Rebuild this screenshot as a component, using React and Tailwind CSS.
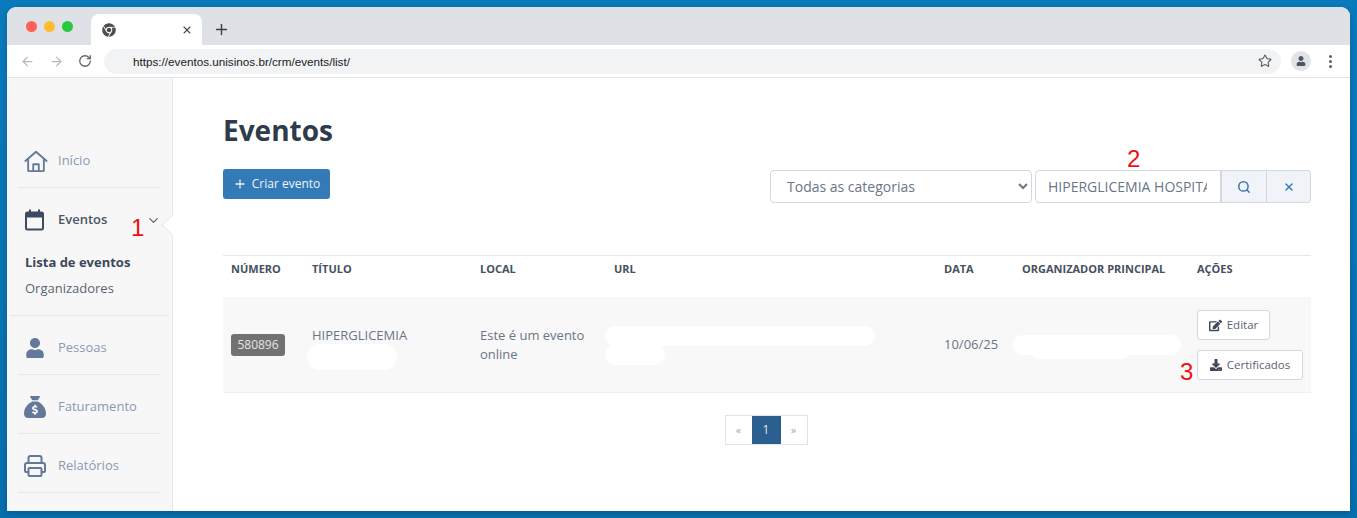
import React from 'react'
import { ArrowLeft, ArrowRight, RotateCw, Star, X, Plus, ChevronDown, Search } from 'lucide-react'
import { FaChrome, FaUser, FaEdit, FaDownload } from 'react-icons/fa'
import { FaSackDollar } from 'react-icons/fa6'

const HomeIcon = () => (
  <svg width="24" height="23" viewBox="0 0 26 24" fill="none" stroke="#64789a" strokeWidth="2" strokeLinejoin="round" strokeLinecap="round" className="ml-[3px]">
    <path d="M1.5 11.5 13 1.5l11.500 10" />
    <path d="M4.500 9.500V21.500a1 1 0 0 0 1 1h15a1 1 0 0 0 1-1V9.500" />
    <path d="M10 22.500V15h6v7.500" />
  </svg>
)

const CalendarIcon = () => (
  <svg width="19" height="22" viewBox="0 0 19 22" fill="none">
    <rect x="1" y="3.500" width="17" height="17" rx="1.500" stroke="#3c4a62" strokeWidth="2" />
    <rect x="1" y="3.500" width="17" height="5" fill="#3c4a62" />
    <rect x="4" y="0.500" width="2" height="4" fill="#3c4a62" />
    <rect x="13" y="0.500" width="2" height="4" fill="#3c4a62" />
  </svg>
)

const PrinterIcon = () => (
  <svg width="22" height="22" viewBox="0 0 22 22" fill="none" stroke="#64789a" strokeWidth="2" strokeLinejoin="round">
    <path d="M4.500 8V3a2 2 0 0 1 2-2h9a2 2 0 0 1 2 2v5" />
    <path d="M4.500 17H2a1 1 0 0 1-1-1v-6a2 2 0 0 1 2-2h16a2 2 0 0 1 2 2v6a1 1 0 0 1-1 1h-2.500" />
    <rect x="4.500" y="13" width="13" height="8" rx="1" />
  </svg>
)

const PersonIcon = () => <FaUser size={20} color="#64789a" />

function NavItem({ icon, label }) {
  return (
    <div className="h-[59px] pt-[6px] mx-[11px] flex items-center border-b border-[#e2e8f0] text-[13px] text-[#8a9ab4]">
      <div className="w-[40px] flex justify-center pr-[7px] shrink-0">{icon}</div>
      <span>{label}</span>
    </div>
  )
}

function Sidebar() {
  return (
    <aside className="relative w-[166px] shrink-0 bg-[#f7f7f7] border-r border-[#e2e8f0] pt-[51px]">
      <NavItem icon={<HomeIcon />} label="Início" />
      <div className="mx-[3px] border-b border-[#e2e8f0] h-[128px]">
        <div className="h-[64px] pl-[8px] flex items-center text-[13px] font-semibold text-[#4a5566]">
          <div className="w-[40px] flex justify-center pr-[7px] shrink-0"><CalendarIcon /></div>
          <span>Eventos</span>
          <ChevronDown size={15} strokeWidth={2} className="ml-[39px] text-[#5a6678]" />
        </div>
        <div className="-mt-[3px] pl-[15px] text-[13px] leading-[26px] text-[#5a6472]">
          <div className="font-bold text-[#3e4858]">Lista de eventos</div>
          <div>Organizadores</div>
        </div>
      </div>
      <NavItem icon={<PersonIcon />} label="Pessoas" />
      <NavItem icon={<FaSackDollar size={22} color="#64789a" />} label="Faturamento" />
      <NavItem icon={<PrinterIcon />} label="Relatórios" />
      {/* notch pointing at the active item */}
      <div className="absolute right-[-1px] top-[136px] w-[11px] h-[22px] overflow-hidden">
        <div className="absolute left-[3px] top-[3px] w-[16px] h-[16px] rotate-45 bg-white border-l border-b border-[#e2e8f0]" />
      </div>
    </aside>
  )
}

function Blob({ className }) {
  return <div className={'absolute bg-white rounded-full ' + className} />
}

function EventsTable() {
  const grid = 'grid grid-cols-[81px_168px_134px_330px_78px_174px_1fr]'
  return (
    <div className="mt-[52px]">
      <div className={grid + ' h-[42px] pt-[5px] items-start border-t border-[#e5e7eb] pl-[8px] text-[11px] leading-[15px] font-bold text-[#465060]'}>
        <div>NÚMERO</div>
        <div>TÍTULO</div>
        <div>LOCAL</div>
        <div>URL</div>
        <div>DATA</div>
        <div>ORGANIZADOR PRINCIPAL</div>
        <div className="pl-[1px]">AÇÕES</div>
      </div>
      <div className={grid + ' relative h-[96px] bg-[#f8f8f8] border-b border-[#ecf0f6] pl-[8px] text-[13px] text-[#6a7686]'}>
        <div className="pt-[37px]">
          <span className="inline-block w-[54px] h-[22px] leading-[21px] text-center rounded-[3px] bg-[#727272] text-[12px] text-[#e4e4e4]">580896</span>
        </div>
        <div className="pt-[29px] leading-[19px]">HIPERGLICEMIA</div>
        <div className="pt-[29px] leading-[19px] pr-[20px]">Este é um evento online</div>
        <div />
        <div className="pt-[38px] leading-[19px]">10/06/25</div>
        <div />
        <div className="pt-[13px] pl-[1px] flex flex-col items-start gap-[10px]">
          <button className="h-[30px] w-[73px] flex items-center justify-center gap-[5px] bg-white border border-[#d4d7dc] rounded-[3px] text-[11.500px] text-[#5a6472]">
            <FaEdit size={13} color="#3e4858" />Editar
          </button>
          <button className="h-[30px] w-[106px] flex items-center justify-center gap-[5px] bg-white border border-[#d4d7dc] rounded-[3px] text-[11.500px] text-[#5a6472]">
            <FaDownload size={12} color="#3e4858" />Certificados
          </button>
        </div>
        {/* blurred-out values */}
        <Blob className="left-[84px] top-[47px] w-[90px] h-[26px]" />
        <Blob className="left-[382px] top-[29px] w-[270px] h-[20px]" />
        <Blob className="left-[382px] top-[47px] w-[60px] h-[21px]" />
        <Blob className="left-[790px] top-[38px] w-[168px] h-[20px]" />
        <Blob className="left-[808px] top-[44px] w-[100px] h-[18px]" />
      </div>
    </div>
  )
}

function Pagination() {
  return (
    <div className="mt-[22px] mr-[2px] flex justify-center">
      <div className="flex h-[30px] border border-[#e2e2e2] text-[11px] text-[#a9a9a9]">
        <div className="w-[26px] flex items-center justify-center bg-white">«</div>
        <div className="w-[29px] flex items-center justify-center bg-[#2a5f90] text-[12px] text-[#d8e6f2]">1</div>
        <div className="w-[26px] flex items-center justify-center bg-white">»</div>
      </div>
    </div>
  )
}

function Browser() {
  return (
    <>
      <div className="h-[38px] bg-[#dee1e6] flex items-end rounded-t-[9px] shrink-0 pl-[84px]">
        <div className="absolute left-[26px] top-[21px] flex gap-[7px]">
          <span className="w-[11px] h-[11px] rounded-full bg-[#ff5f57]" />
          <span className="w-[11px] h-[11px] rounded-full bg-[#ffbd2e]" />
          <span className="w-[11px] h-[11px] rounded-full bg-[#28c940]" />
        </div>
        <div className="w-[111px] h-[31px] bg-white rounded-t-[8px] flex items-center justify-between pl-[11px] pr-[9px]">
          <FaChrome size={14} color="#4a4d52" />
          <X size={12} strokeWidth={2.2} className="text-[#45484d]" />
        </div>
        <Plus size={17} strokeWidth={2} className="ml-[11px] mb-[7px] text-[#3c4043]" />
      </div>
      <div className="h-[33px] bg-white border-b border-[#e4e4e4] flex items-center shrink-0 pl-[13px] pr-[14px]">
        <ArrowLeft size={15} className="text-[#b8babd]" />
        <ArrowRight size={15} className="ml-[14px] text-[#b8babd]" />
        <RotateCw size={14} strokeWidth={2.2} className="ml-[14px] text-[#5f6368]" />
        <div className="ml-[12px] w-[1177px] h-[25px] bg-[#f1f3f4] rounded-full flex items-center justify-between pl-[29px] pr-[9px]">
          <span className="pt-[2px] font-['Liberation_Sans',sans-serif] text-[11.700px] text-[#202124]">https://eventos.unisinos.br/crm/events/list/</span>
          <Star size={14} strokeWidth={2} className="text-[#5f6368]" />
        </div>
        <div className="ml-[10px] w-[20px] h-[20px] rounded-full bg-[#e1e3e6] flex items-center justify-center">
          <FaUser size={10} color="#4c5666" />
        </div>
        <div className="ml-[18px] flex flex-col gap-[2px]">
          <span className="w-[3px] h-[3px] rounded-full bg-[#5f6368]" />
          <span className="w-[3px] h-[3px] rounded-full bg-[#5f6368]" />
          <span className="w-[3px] h-[3px] rounded-full bg-[#5f6368]" />
        </div>
      </div>
    </>
  )
}

function Annotation({ className, children }) {
  return <span className={"absolute font-['Liberation_Sans',sans-serif] text-[24px] leading-none text-[#ee1111] " + className}>{children}</span>
}

export default function App() {
  return (
    <div className="w-[1357px] h-[518px] bg-gradient-to-b from-[#0a7abc] to-[#086fad] p-[7px] overflow-hidden font-['Open_Sans',sans-serif]">
      <div className="w-[1343px] h-[504px] flex flex-col bg-white rounded-t-[9px] overflow-hidden shadow-[0_2px_6px_rgba(0,0,0,0.2)]">
        <Browser />
        <div className="flex flex-1 min-h-0">
          <Sidebar />
          <main className="flex-1 pl-[50px] pr-[39px]">
            <h1 className="mt-[34px] text-[28px] leading-[36px] font-bold text-[#2f3b4b]">Eventos</h1>
            <div className="mt-[21px] flex items-start justify-between">
              <button className="h-[30px] w-[107px] flex items-center justify-center gap-[5px] rounded-[3px] bg-[#337ab7] text-[12px] text-[#eef4fa]">
                <Plus size={14} strokeWidth={2.2} />Criar evento
              </button>
              <div className="mt-[1px] flex h-[33px] text-[14px] text-[#6a7686]">
                <select className="w-[262px] h-full pl-[12px] bg-white border border-[#d4d7dc] rounded-[4px] text-[#6a7686] outline-none">
                  <option>Todas as categorias</option>
                </select>
                <input readOnly value="HIPERGLICEMIA HOSPITALAR" className="ml-[3px] w-[186px] h-full pl-[12px] pr-[13px] bg-white border border-[#d4d7dc] rounded-l-[4px] outline-none" />
                <div className="w-[46px] flex items-center justify-center bg-[#f0f4f9] border-y border-x border-[#d4d7dc]">
                  <Search size={14} strokeWidth={2.7} color="#3a7ab5" />
                </div>
                <div className="w-[44px] flex items-center justify-center bg-[#f0f4f9] border-y border-r border-[#d4d7dc] rounded-r-[4px]">
                  <X size={12} strokeWidth={3} color="#3a7ab5" />
                </div>
              </div>
            </div>
            <EventsTable />
            <Pagination />
          </main>
        </div>
        {/* red step markers painted over the screenshot */}
        <Annotation className="left-[131px] top-[216px]">1</Annotation>
        <Annotation className="left-[1127px] top-[147px]">2</Annotation>
        <Annotation className="left-[1180px] top-[360px]">3</Annotation>
      </div>
    </div>
  )
}
